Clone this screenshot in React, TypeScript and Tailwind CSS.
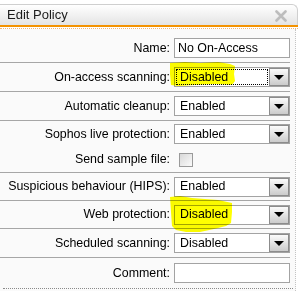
import React from "react";

type Row = { label: string; kind: "input" | "select" | "check"; value?: string; focus?: boolean; h: string; sep?: boolean };

const rows: Row[] = [
  { label: "Name:", kind: "input", value: "No On-Access", h: "h-[29px]", sep: true },
  { label: "On-access scanning:", kind: "select", value: "Disabled", focus: true, h: "h-[29px]", sep: true },
  { label: "Automatic cleanup:", kind: "select", value: "Enabled", h: "h-[29px]", sep: true },
  { label: "Sophos live protection:", kind: "select", value: "Enabled", h: "h-[26px]" },
  { label: "Send sample file:", kind: "check", h: "h-[26px]", sep: true },
  { label: "Suspicious behaviour (HIPS):", kind: "select", value: "Enabled", h: "h-[28px]", sep: true },
  { label: "Web protection:", kind: "select", value: "Disabled", h: "h-[28px]", sep: true },
  { label: "Scheduled scanning:", kind: "select", value: "Disabled", h: "h-[29px]", sep: true },
];

function Select({ value, focus }: { value: string; focus?: boolean }) {
  return (
    <div className="flex items-center h-[20px] w-[116px] border border-[#a3a3a3] bg-white">
      {focus ? (
        <span className="flex-1 h-[16px] ml-[1px] mr-[1px] border border-dotted border-black pl-[3px] flex items-center">
          {value}
        </span>
      ) : (
        <span className="flex-1 pl-[5px]">{value}</span>
      )}
      <div className="w-[20px] h-[18px] border border-[#8c8c8c] bg-gradient-to-b from-[#fbfbfb] to-[#cbcbcb] flex items-center justify-center">
        <div className="w-0 h-0 border-l-[5px] border-r-[5px] border-t-[5px] border-l-transparent border-r-transparent border-t-black" />
      </div>
    </div>
  );
}

function Control({ row }: { row: Row }) {
  if (row.kind === "input")
    return (
      <div className="h-[20px] w-[116px] border border-[#a3a3a3] bg-white pl-[3px] flex items-center">
        {row.value}
      </div>
    );
  if (row.kind === "check")
    return (
      <div className="ml-[5px] w-[14px] h-[14px] border border-[#9a9a9a] bg-gradient-to-br from-[#d8d8d8] to-[#fbfbfb]" />
    );
  return <Select value={row.value!} focus={row.focus} />;
}

export default function App() {
  return (
    <div className="relative w-[303px] h-[291px] overflow-hidden bg-white text-[12.4px] text-black font-['Liberation_Sans',Arial,sans-serif]">
      <div className="pt-[4px] w-[298px]">
        <div className="h-[21px] border-t border-r border-[#cfcfcf] rounded-tr-[6px] bg-gradient-to-b from-white to-[#e4e4e4] flex items-center justify-between pl-[7px] pr-[10px]">
          <span className="text-[13px] text-[#1a1a1a]">Edit Policy</span>
          <svg width="12" height="12" viewBox="0 0 12 12" className="mt-[1px]">
            <path d="M1.5 1.5 L10.5 10.5 M10.5 1.5 L1.5 10.5" stroke="#bdbdbd" strokeWidth="2.6" strokeLinecap="round" />
          </svg>
        </div>
        <div className="h-[2px] bg-[#f39200]" />
        <div className="h-[2px] border-b border-dotted border-[#f2b774]" />
      </div>

      <div className="w-[296px] h-[262px] border-r border-dotted border-[#c4c4c4] bg-[#fafafa] pt-[5px]">
        {rows.map((row) => (
          <div
            key={row.label}
            className={`${row.h} w-[290px] flex items-center ${row.sep ? "border-b border-[#a6a6a6]" : ""}`}
          >
            <span className="w-[170px] text-right whitespace-nowrap">{row.label}</span>
            <div className="ml-[4px]">
              <Control row={row} />
            </div>
          </div>
        ))}
        <div className="h-[30px] w-[290px] flex items-center">
          <span className="w-[170px] text-right">Comment:</span>
          <div className="ml-[4px] h-[20px] w-[116px] border border-[#a3a3a3] bg-white" />
        </div>
        <div className="ml-[3px] w-[290px] border-b border-dotted border-[#8a8a8a]" />
      </div>

      <svg className="absolute left-0 top-0 pointer-events-none mix-blend-multiply" width="303" height="291">
        <path
          d="M170 63 L185 62 L200 63 L218 62 L230 64 L235 66 L234 74 L235 81 L232 85 L215 84 L195 85 L178 86 L171 85 L170 74 Z"
          fill="#ffff00"
        />
        <path
          d="M170 197 L180 196 L192 198 L205 199 L218 200 L232 203 L232 212 L231 223 L226 226 L214 229 L200 232 L186 232 L176 230 L172 226 L171 212 Z"
          fill="#ffff00"
        />
      </svg>
    </div>
  );
}
